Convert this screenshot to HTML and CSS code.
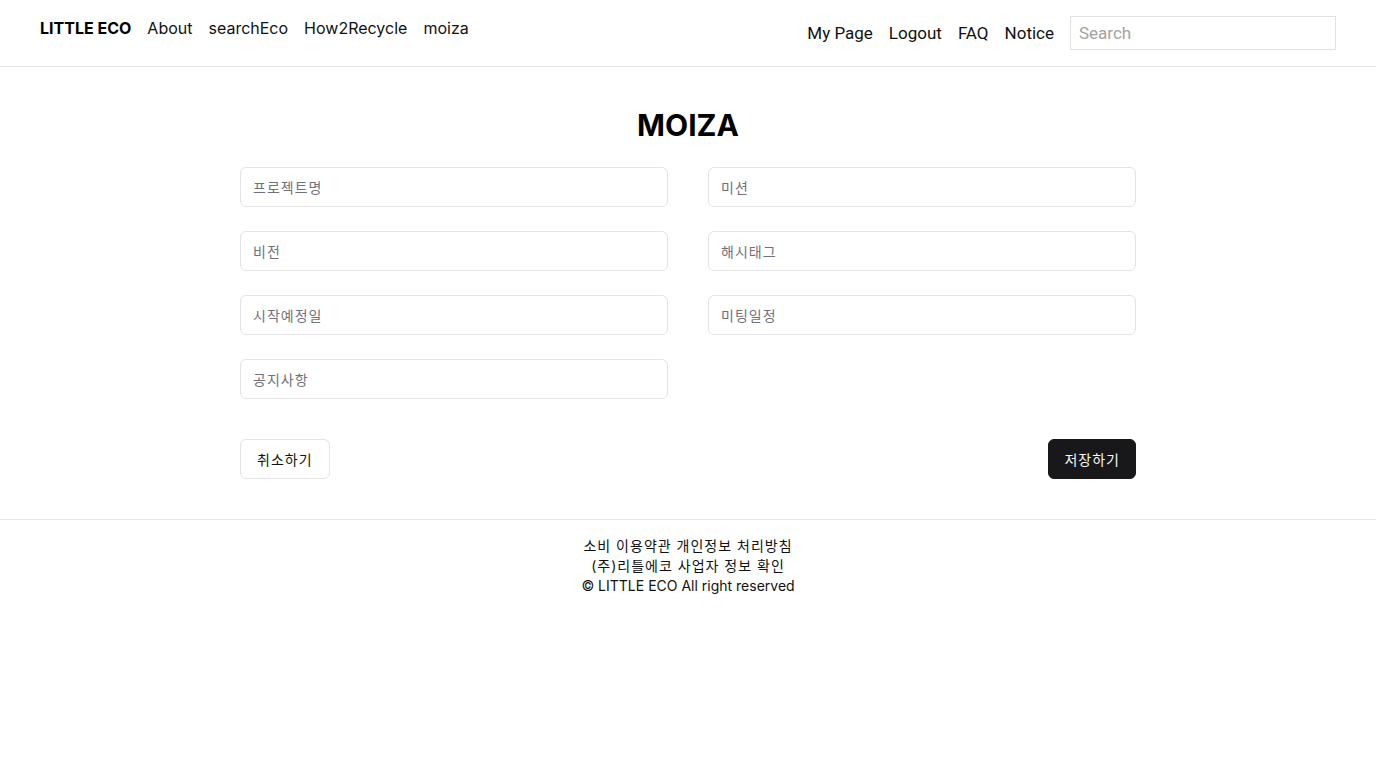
FILE: index.html
```html
<!DOCTYPE html>
<html lang="ko">
<head>
<meta charset="utf-8">
<title>MOIZA</title>
<link rel="stylesheet" href="styles.css">
</head>
<body>
<header class="header">
  <nav class="nav-left">
    <a class="brand" href="#">LITTLE ECO</a>
    <a class="nav-link" href="#">About</a>
    <a class="nav-link" href="#">searchEco</a>
    <a class="nav-link" href="#">How2Recycle</a>
    <a class="nav-link" href="#">moiza</a>
  </nav>
  <nav class="nav-right">
    <a class="nav-r" href="#">My Page</a>
    <a class="nav-r" href="#">Logout</a>
    <a class="nav-r" href="#">FAQ</a>
    <a class="nav-r" href="#">Notice</a>
    <input class="search" type="text" placeholder="Search">
  </nav>
</header>
<main class="main">
  <h1 class="title">MOIZA</h1>
  <form class="form">
    <div class="grid">
      <input class="field" type="text" placeholder="프로젝트명">
      <input class="field" type="text" placeholder="미션">
      <input class="field" type="text" placeholder="비전">
      <input class="field" type="text" placeholder="해시태그">
      <input class="field" type="text" placeholder="시작예정일">
      <input class="field" type="text" placeholder="미팅일정">
      <input class="field" type="text" placeholder="공지사항">
    </div>
    <div class="actions">
      <button class="btn btn-cancel" type="button">취소하기</button>
      <button class="btn btn-save" type="button">저장하기</button>
    </div>
  </form>
</main>
<footer class="footer">
  <p class="ko">소비 이용약관 개인정보 처리방침</p>
  <p class="ko">(주)리틀에코 사업자 정보 확인</p>
  <p>© LITTLE ECO All right reserved</p>
</footer>
</body>
</html>
```
FILE: styles.css
```css
* { box-sizing: border-box; }
body {
  margin: 0;
  font-family: Inter, "Noto Sans CJK KR", sans-serif;
  color: #111;
  background: #fff;
}
a { text-decoration: none; color: inherit; }
.header {
  height: 67px;
  border-bottom: 1px solid #e5e5e5;
  display: flex;
  justify-content: space-between;
  padding: 0 40px;
}
.nav-left {
  display: flex;
  align-items: center;
  height: 56px;
  gap: 16px;
  font-size: 16px;
}
.brand { font-weight: 700; color: #000; }
.nav-link { color: #111; }
.nav-right {
  display: flex;
  align-items: center;
  height: 66px;
  font-family: Roboto, "Noto Sans CJK KR", sans-serif;
  font-size: 17px;
  gap: 16px;
}
.nav-r { color: #111; }
.search {
  width: 266px;
  height: 34px;
  border: 1px solid #e2e2e2;
  border-radius: 0;
  padding: 0 8px;
  font-family: Roboto, sans-serif;
  font-size: 17px;
  outline: none;
}
.search::placeholder { color: #a3a3a3; }
.main {
  width: 896px;
  margin: 0 auto;
  padding: 40px 0 40px;
}
.title {
  margin: 0 0 24px;
  text-align: center;
  font-size: 30px;
  font-weight: 700;
  line-height: 36px;
  color: #000;
}
.grid {
  display: grid;
  grid-template-columns: 1fr 1fr;
  column-gap: 40px;
  row-gap: 24px;
}
.field {
  height: 40px;
  border: 1px solid #e4e4e7;
  border-radius: 6px;
  padding: 0 12px;
  font-family: Inter, "Noto Sans CJK KR", sans-serif;
  font-size: 14px;
  letter-spacing: 1px;
  outline: none;
}
.field::placeholder { color: #71717a; }
.actions {
  display: flex;
  justify-content: space-between;
  margin-top: 40px;
}
.btn {
  height: 40px;
  border-radius: 6px;
  font-family: Inter, "Noto Sans CJK KR", sans-serif;
  font-size: 14px;
  letter-spacing: 1px;
  padding: 0 16px;
  cursor: pointer;
}
.btn-cancel {
  background: #fff;
  border: 1px solid #e4e4e7;
  color: #111;
}
.btn-save {
  background: #18181b;
  border: 1px solid #18181b;
  color: #fafafa;
  padding: 0 15px;
}
.footer {
  border-top: 1px solid #e5e5e5;
  padding-top: 16px;
  text-align: center;
  font-size: 14px;
  line-height: 20px;
}
.footer p { margin: 0; }
.footer .ko { letter-spacing: 1px; }
```
